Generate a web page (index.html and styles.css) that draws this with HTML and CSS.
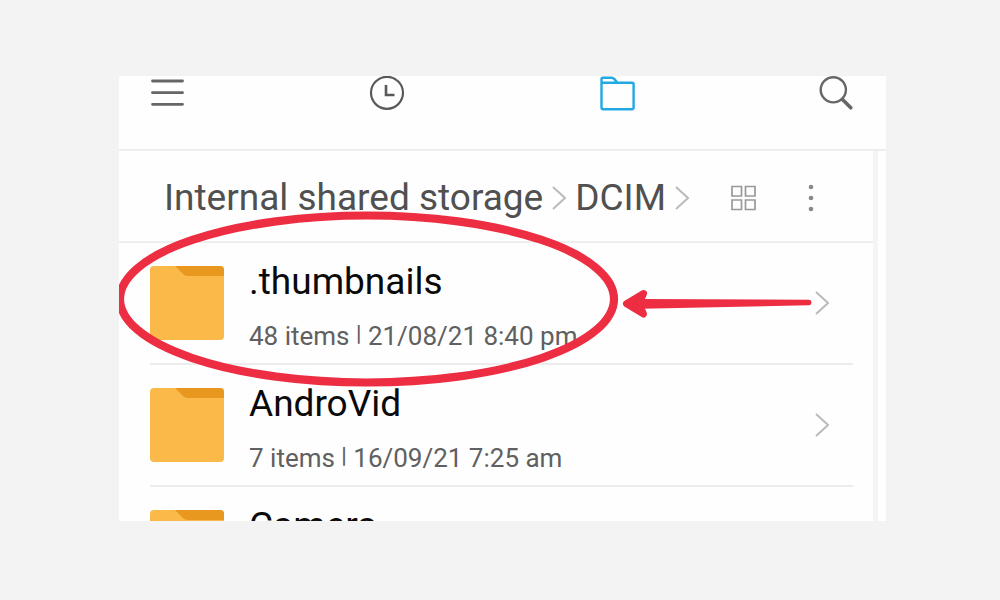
FILE: index.html
```html
<!DOCTYPE html>
<html lang="en">
<head>
<meta charset="utf-8">
<meta name="viewport" content="width=device-width, initial-scale=1">
<title>File Manager</title>
<link rel="stylesheet" href="styles.css">
</head>
<body>
<main class="card">
  <header class="topbar">
    <div class="group">
      <button class="icon-btn" aria-label="Menu">
        <svg width="36" height="36" viewBox="0 0 36 36" fill="none" stroke="#666" stroke-width="2.800" stroke-linecap="round"><path d="M2.500 5h30M2.500 16.700h30M2.500 28.300h30"/></svg>
      </button>
      <button class="icon-btn" aria-label="Recent">
        <svg width="36" height="36" viewBox="0 0 36 36" fill="none" stroke="#595959" stroke-width="2.200"><circle cx="18" cy="16.800" r="16"/><path d="M17 9v10h8.500" stroke-width="2.600"/></svg>
      </button>
    </div>
    <div class="group">
      <button class="icon-btn" aria-label="Storage">
        <svg width="36" height="36" viewBox="0 0 36 36" fill="none" stroke="#22a9e4" stroke-width="2.400" stroke-linejoin="round"><path d="M2.500 6.800V3.200q0-1.500 1.500-1.500h8.500q1.500 0 2.700 1.200l3.300 3.900M2.500 6.800h30.500q1.600 0 1.600 1.600v23.200q0 1.600-1.600 1.600H4.100q-1.600 0-1.600-1.600z"/></svg>
      </button>
      <button class="icon-btn" aria-label="Search">
        <svg width="36" height="36" viewBox="0 0 36 36" fill="none" stroke="#666" stroke-width="2.400" stroke-linecap="round"><circle cx="15.300" cy="13.800" r="12.600"/><path d="M24.500 23.500l8.300 8.300" stroke-width="3.600"/></svg>
      </button>
    </div>
  </header>

  <div class="pane">
    <div class="pathbar">
      <nav class="crumbs" aria-label="Path">
        <a href="#storage">Internal shared storage</a>
        <svg class="chevron" width="14" height="24" viewBox="0 0 14 24"><path d="M1 1l12 11L1 23"/></svg>
        <a href="#dcim">DCIM</a>
        <svg class="chevron" width="14" height="24" viewBox="0 0 14 24"><path d="M1 1l12 11L1 23"/></svg>
      </nav>
      <div class="tools">
        <button class="icon-btn" aria-label="Grid view">
          <svg width="26" height="26" viewBox="0 0 26 26" fill="none" stroke="#999" stroke-width="1.700"><path d="M1 1.500h9.500v9.500H1zM14.500 1.500h9.500v9.500h-9.500zM1 15h9.500v9.500H1zM14.500 15h9.500v9.500h-9.500z"/></svg>
        </button>
        <button class="icon-btn" aria-label="More options">
          <svg width="6" height="28" viewBox="0 0 6 28" fill="#888"><circle cx="3" cy="3" r="2.300"/><circle cx="3" cy="14" r="2.300"/><circle cx="3" cy="25" r="2.300"/></svg>
        </button>
      </div>
    </div>

    <ul class="files">
      <li>
        <a class="row" href="#thumbnails">
          <svg width="74" height="74" viewBox="0 0 74 74"><rect width="74" height="74" rx="4" fill="#fbb94a"/><path d="M25 0h45q4 0 4 4v6H38q-3 0-5-2z" fill="#e8981e"/></svg>
          <span class="info"><span class="name">.thumbnails</span><span class="meta">48 items <span class="bar">|</span> 21/08/21 8:40 pm</span></span>
          <svg class="chevron" width="14" height="24" viewBox="0 0 14 24"><path d="M1 1l12 11L1 23"/></svg>
        </a>
      </li>
      <li>
        <a class="row" href="#androvid">
          <svg width="74" height="74" viewBox="0 0 74 74"><rect width="74" height="74" rx="4" fill="#fbb94a"/><path d="M25 0h45q4 0 4 4v6H38q-3 0-5-2z" fill="#e8981e"/></svg>
          <span class="info"><span class="name">AndroVid</span><span class="meta">7 items <span class="bar">|</span> 16/09/21 7:25 am</span></span>
          <svg class="chevron" width="14" height="24" viewBox="0 0 14 24"><path d="M1 1l12 11L1 23"/></svg>
        </a>
      </li>
      <li>
        <a class="row" href="#camera">
          <svg width="74" height="74" viewBox="0 0 74 74"><rect width="74" height="74" rx="4" fill="#fbb94a"/><path d="M25 0h45q4 0 4 4v6H38q-3 0-5-2z" fill="#e8981e"/></svg>
          <span class="info"><span class="name">Camera</span></span>
        </a>
      </li>
    </ul>
  </div>

  <svg class="markup" width="767" height="445" viewBox="0 0 767 445" fill="#ed2d42" stroke="#ed2d42" aria-hidden="true">
    <ellipse cx="248" cy="223" rx="247" ry="83.500" fill="none" stroke-width="8.200"/>
    <path d="M508 227L523 223L690 223.700Q692.500 224 692.500 226.500T690 229.300L523 232.800z" stroke="none"/>
    <path d="M524.500 217.500L507.500 227.800L524.500 238L520 227.800z" stroke-width="7" stroke-linejoin="round"/>
  </svg>
</main>
</body>
</html>
```
FILE: styles.css
```css
* {
  box-sizing: border-box;
}

body {
  margin: 0;
  height: 100vh;
  padding: 76px 114px 79px 119px;
  display: flex;
  background: #f3f3f3;
  font-family: Roboto, "Liberation Sans", sans-serif;
}

a {
  color: inherit;
  text-decoration: none;
}

svg {
  display: block;
  flex: none;
}

.card {
  position: relative;
  flex: 1;
  display: flex;
  flex-direction: column;
  overflow: hidden;
  background: #fefefe;
}

.icon-btn {
  display: block;
  padding: 0;
  border: 0;
  background: none;
}

.topbar {
  flex: none;
  display: flex;
  justify-content: space-between;
  padding: 0 32px 37px 31px;
  border-bottom: 2px solid #eee;
}

.group {
  display: flex;
  gap: 183px;
}

.pane {
  flex: 1;
  min-height: 0;
  margin-right: 8px;
  border-right: 5px solid #f5f5f5;
}

.pathbar {
  display: flex;
  align-items: center;
  justify-content: space-between;
  padding: 24px 59px 20px 45px;
  border-bottom: 2px solid #eee;
}

.crumbs {
  display: flex;
  align-items: center;
  gap: 9px;
  font-size: 37px;
  line-height: 46px;
  color: #505050;
  white-space: nowrap;
}

.tools {
  display: flex;
  align-items: center;
  gap: 51px;
}

.chevron {
  fill: none;
  stroke: #bbb;
  stroke-width: 2;
}

.files {
  margin: 0;
  padding: 0 20px 0 31px;
  list-style: none;
}

.row {
  display: flex;
  align-items: center;
  gap: 25px;
  min-height: 122px;
  padding-right: 24px;
  border-bottom: 2px solid #ececec;
}

.info {
  flex: 1;
  display: flex;
  flex-direction: column;
  min-height: 120px;
  padding-top: 12px;
  white-space: nowrap;
}

.name {
  font-size: 37px;
  line-height: 54px;
  color: #0a0a0a;
}

.meta {
  font-size: 26px;
  line-height: 54px;
  color: #606060;
}

.bar {
  font-size: 22px;
  font-weight: 500;
  line-height: 22px;
  vertical-align: 4px;
}

.markup {
  position: absolute;
  top: 0;
  left: 0;
}
```
